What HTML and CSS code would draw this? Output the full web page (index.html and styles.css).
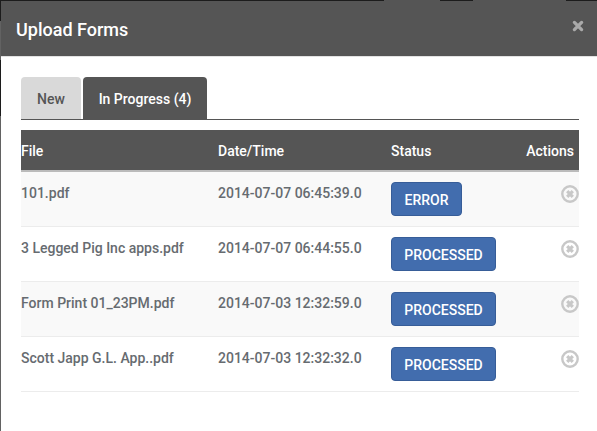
FILE: index.html
```html
<!DOCTYPE html>
<html lang="en">
<head>
<meta charset="utf-8">
<title>Upload Forms</title>
<link rel="stylesheet" href="styles.css">
</head>
<body>
<svg class="defs" width="0" height="0" aria-hidden="true">
  <symbol id="remove" viewBox="0 0 18 18">
    <circle cx="9" cy="9" r="7.7" fill="none" stroke="currentColor" stroke-width="2.4"/>
    <path d="M6.2 6.2l5.6 5.6M11.8 6.2l-5.6 5.6" stroke="currentColor" stroke-width="3.2"/>
  </symbol>
</svg>
<div class="page">
<div class="modal">
  <header class="modal-header">
    <h1>Upload Forms</h1>
    <button class="close" aria-label="Close"><svg width="12" height="12" viewBox="0 0 12 12"><path d="M2.4 2.4l7.2 7.2M9.6 2.4L2.4 9.6" stroke="currentColor" stroke-width="3.3" stroke-linecap="round"/></svg></button>
  </header>
  <main class="modal-body">
    <nav class="tabs">
      <a class="tab">New</a>
      <a class="tab active">In Progress (4)</a>
    </nav>
    <table>
      <thead>
        <tr><th class="file">File</th><th class="date">Date/Time</th><th class="status">Status</th><th class="actions">Actions</th></tr>
      </thead>
      <tbody>
        <tr><td>101.pdf</td><td>2014-07-07 06:45:39.0</td><td><button class="btn error">ERROR</button></td><td class="actions"><svg class="icon"><use href="#remove"/></svg></td></tr>
        <tr><td>3 Legged Pig Inc apps.pdf</td><td>2014-07-07 06:44:55.0</td><td><button class="btn">PROCESSED</button></td><td class="actions"><svg class="icon"><use href="#remove"/></svg></td></tr>
        <tr><td>Form Print 01_23PM.pdf</td><td>2014-07-03 12:32:59.0</td><td><button class="btn">PROCESSED</button></td><td class="actions"><svg class="icon"><use href="#remove"/></svg></td></tr>
        <tr><td>Scott Japp G.L. App..pdf</td><td>2014-07-03 12:32:32.0</td><td><button class="btn">PROCESSED</button></td><td class="actions"><svg class="icon"><use href="#remove"/></svg></td></tr>
      </tbody>
    </table>
  </main>
</div>
</div>
</body>
</html>
```
FILE: styles.css
```css
* { box-sizing: border-box; }
body {
  margin: 0;
  font: 500 14px/20px Roboto, sans-serif;
  color: #666b70;
  overflow: hidden;
}
.defs { position: absolute; }
.page {
  height: 431px;
  padding: 1px 0 0 1px;
  background:
    linear-gradient(90deg, transparent 384px, #555 384px 440px, transparent 440px 473px, #555 473px 566px, transparent 566px) 0 0 / 100% 1px no-repeat,
    linear-gradient(#1c1c1c 21px, #626262 21px 60px, #1c1c1c 60px 116px, #626262 116px);
}
.modal { height: 430px; background: #fff; }
.modal-header {
  display: flex;
  justify-content: space-between;
  height: 56px;
  padding: 19px 13px 0 15px;
  background: #555;
  border-bottom: 1px solid #e2e2e2;
}
h1 {
  margin: 0;
  font-size: 18px;
  line-height: 20px;
  font-weight: 500;
  color: #fff;
}
button { font: inherit; }
.close {
  height: 12px;
  padding: 0;
  border: 0;
  background: none;
  color: #aaa;
}
.close svg { display: block; }
.modal-body { padding: 20px 18px 0 20px; }
.tabs {
  display: flex;
  gap: 2px;
  height: 43px;
  margin-bottom: 10px;
  border-bottom: 1px solid #555;
}
.tab {
  width: 60px;
  padding-top: 12px;
  text-align: center;
  color: #555;
  background: #d9d9d9;
  border-radius: 4px 4px 0 0;
}
.tab.active { width: 124px; color: #fff; background: #555; }
table {
  width: 558px;
  table-layout: fixed;
  border-collapse: separate;
  border-spacing: 0;
}
th {
  height: 42px;
  padding: 1px 0 0;
  font-weight: 500;
  text-align: left;
  color: #fff;
  background: #555;
  border-bottom: 2px solid #bbb;
}
.file { width: 197px; }
.date { width: 173px; }
.status { width: 105px; }
.actions { text-align: right; }
th.actions { padding-right: 5px; }
td {
  height: 55px;
  padding: 11px 0 0;
  vertical-align: top;
  border-bottom: 1px solid #ececec;
}
td:nth-child(3) { padding-top: 10px; }
td.actions { padding-top: 13px; }
tbody tr:nth-child(odd) { background: #f9f9f9; }
.btn {
  display: block;
  width: 105px;
  height: 34px;
  padding: 2px 0 0;
  color: #fff;
  background: #426dae;
  border: 1px solid #375d98;
  border-radius: 4px;
}
.btn.error { width: 71px; }
.icon { display: inline-block; width: 18px; height: 18px; vertical-align: top; color: #c8c8c8; }
```
